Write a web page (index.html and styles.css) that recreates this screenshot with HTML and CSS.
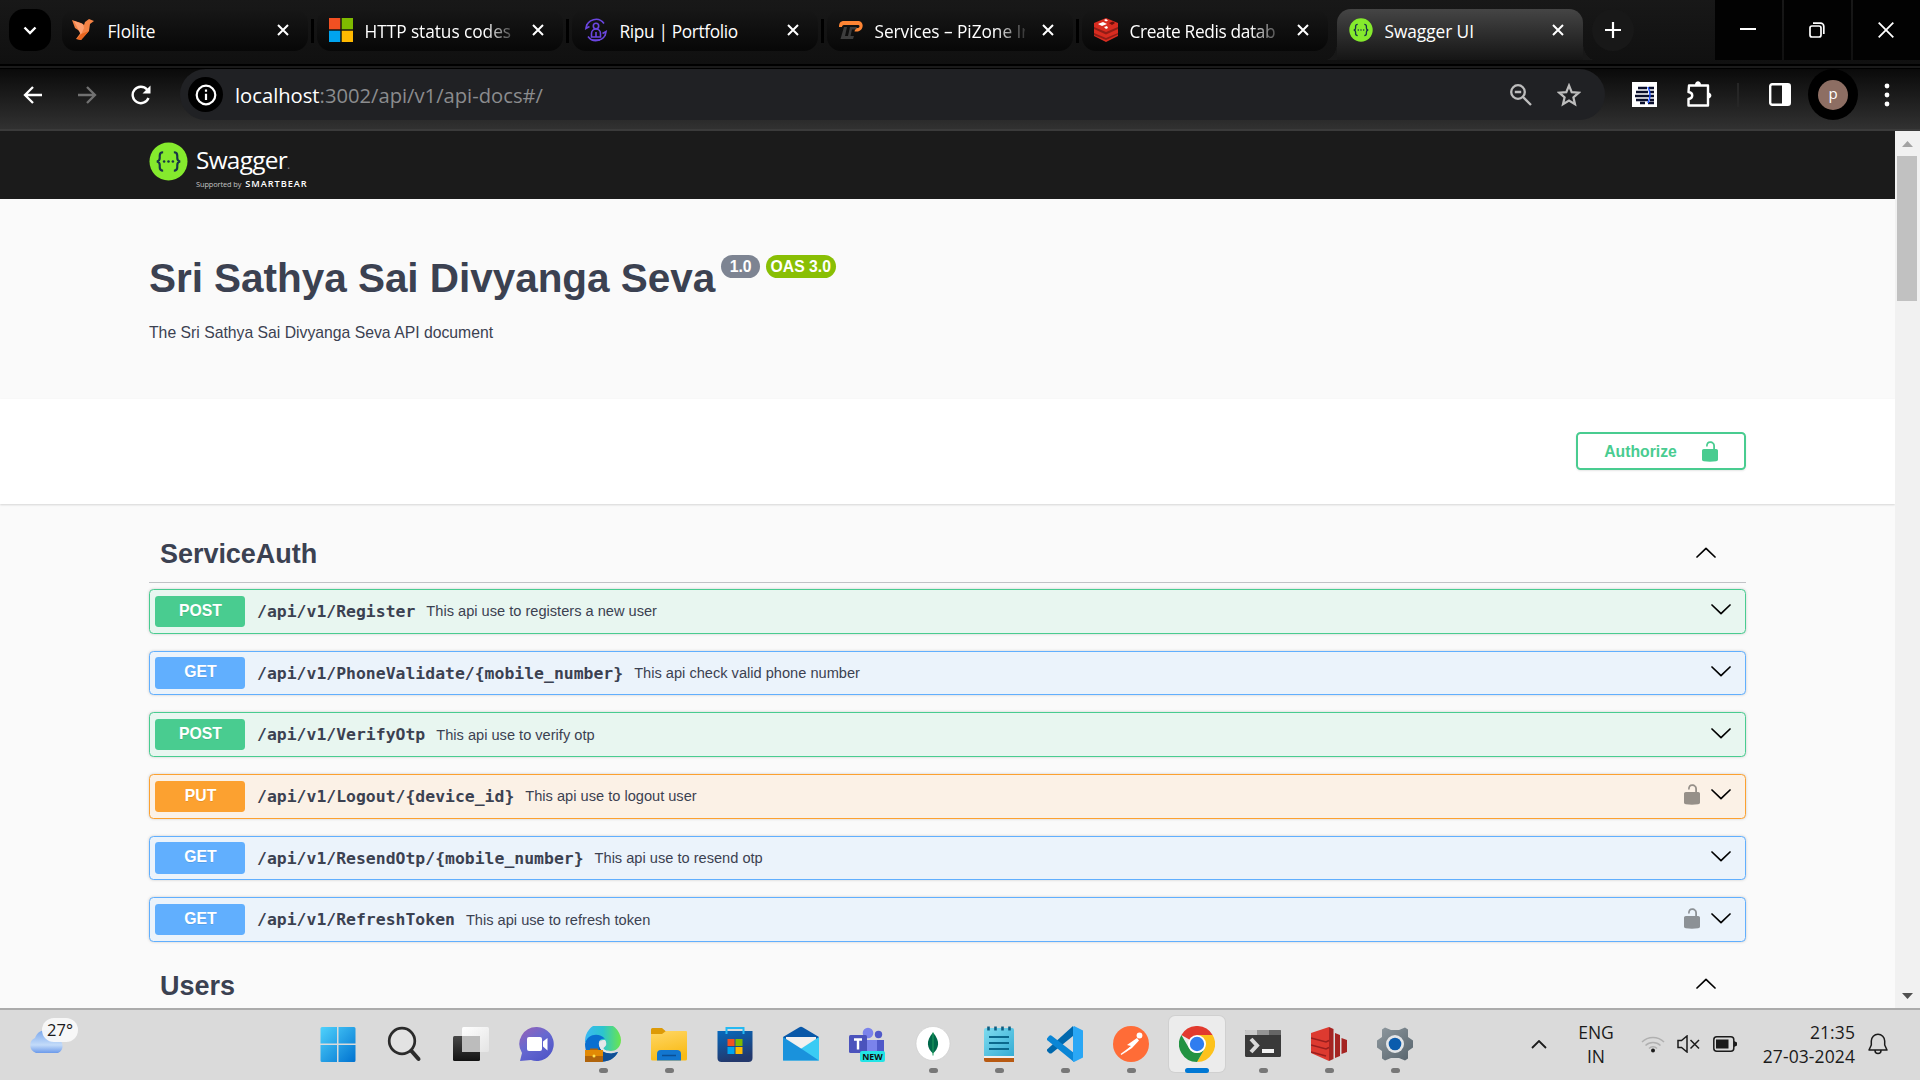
FILE: index.html
```html
<!DOCTYPE html>
<html lang="en">
<head>
<meta charset="utf-8">
<title>Swagger UI</title>
<link rel="stylesheet" href="styles.css">
</head>
<body>
<svg class="defs" width="0" height="0" aria-hidden="true">
  <defs>
    <symbol id="x" viewBox="0 0 12 12"><path d="M1 1l10 10M11 1L1 11" stroke="#fff" stroke-width="2" fill="none"/></symbol>
    <symbol id="down" viewBox="0 0 20 11"><path d="M1 1l9 8.6L19 1" stroke="#000" stroke-width="1.7" fill="none" stroke-linecap="round" stroke-linejoin="round"/></symbol>
    <symbol id="up" viewBox="0 0 20 11"><path d="M1 10l9-8.6L19 10" stroke="#000" stroke-width="1.7" fill="none" stroke-linecap="round" stroke-linejoin="round"/></symbol>
    <symbol id="lock" viewBox="0 0 16 21"><path d="M4 5.5C4 2.2 5.5.3 8.200.3S13 2.400 13 5v3h1.200c1 0 1.800.8 1.800 1.800v8.700c0 1-.9 1.500-1.800 1.800-4 .6-8.600.6-12.400 0C.9 20 0 19.500 0 18.500V9.800C0 8.800.8 8 1.800 8h9.400V5c0-2-1-3-3-3S5.700 3.300 5.700 5.500z" fill="currentColor"/></symbol>
    <symbol id="swag" viewBox="0 0 40 40">
      <circle cx="20" cy="20" r="19.500" fill="#85ea2d"/>
      <g fill="none" stroke="#173647" stroke-width="2.200"><path d="M14.500 10.500c-3 0-3.500 1.200-3.500 3.500v2.500c0 2-.8 3.200-3 3.500 2.200.3 3 1.500 3 3.500V26c0 2.300.5 3.500 3.500 3.500M25.500 10.500c3 0 3.500 1.200 3.500 3.500v2.500c0 2 .8 3.200 3 3.500-2.200.3-3 1.500-3 3.500V26c0 2.300-.5 3.500-3.500 3.500"/></g>
      <g fill="#173647"><circle cx="15.500" cy="20" r="1.300"/><circle cx="20" cy="20" r="1.300"/><circle cx="24.500" cy="20" r="1.300"/></g>
    </symbol>
  </defs>
</svg>

<header class="tabstrip">
  <button class="tab-search"><svg width="14" height="9" viewBox="0 0 14 9"><path d="M1.500 1.500L7 7l5.500-5.500" stroke="#fff" stroke-width="2.400" fill="none"/></svg></button>
  <nav class="tabs">
    <div class="tab">
      <svg class="fav" viewBox="0 0 24 24"><path d="M0 2l9 3 3 2 1-3 4-3 5 2-4 3-1 7-8 9-5-1 3-4 2-3-6-4z" fill="#f58345"/><path d="M2 3l9 3 1 4-3 7z" fill="#ffa070"/><path d="M9 16l8-3-8 9-4-1z" fill="#e8651f"/></svg>
      <span class="title">Flolite</span><svg class="close"><use href="#x"/></svg>
    </div>
    <div class="tab">
      <svg class="fav" viewBox="0 0 24 24"><path fill="#f25022" d="M0 0h11.300v11.300H0z"/><path fill="#7fba00" d="M12.700 0H24v11.300H12.700z"/><path fill="#00a4ef" d="M0 12.700h11.300V24H0z"/><path fill="#ffb900" d="M12.700 12.700H24V24H12.700z"/></svg>
      <span class="title fade">HTTP status codes</span><svg class="close"><use href="#x"/></svg>
    </div>
    <div class="tab">
      <svg class="fav" viewBox="0 0 24 24" fill="none" stroke="#6b46e0" stroke-width="1.600"><path d="M2 10A10 10 0 0 1 20 5.500M22 14A10 10 0 0 1 4 18.500M3 6L2 10.500l3.500-2M21 18l1-4.500-3.500 2"/><circle cx="12" cy="8" r="2.700"/><path d="M7.500 19v-3.500a4.500 4.500 0 0 1 9 0V19zM12 14v5M8 22h8"/></svg>
      <span class="title tight">Ripu | Portfolio</span><svg class="close"><use href="#x"/></svg>
    </div>
    <div class="tab">
      <svg class="fav" viewBox="0 0 24 24"><path d="M0 9c0-4 1.500-6 5-6h14c6 0 6.500 9 0 10.500h-3.500l1-3.500H19c2-.5 2-3 0-3H6C4 7 3 7.500 3 9z" fill="#ff8534"/><path d="M5 9h3l-2 9h3l2-9h7l-1 2.500h-4L11.500 18H15l-1 3H1.500z" fill="#3d3d3d"/></svg>
      <span class="title fade">Services – PiZone In</span><svg class="close"><use href="#x"/></svg>
    </div>
    <div class="tab">
      <svg class="fav" viewBox="0 0 24 24"><path d="M0 5l12-5 12 5v13l-12 6-12-6z" fill="#d82c20"/><path d="M0 9l12 5 12-5v2l-12 5.500L0 11zM0 15l12 5 12-5v1.500L12 22 0 17z" fill="#911d16"/><path d="M4 6l5-2 4 2-5 2zM10 2l2-1 2 1.500-2 1zM10 9l3-1 1 2-2 1z" fill="#fff"/><path d="M15 5l4-1.500 2 1.500-3 2z" fill="#6b0f0a"/></svg>
      <span class="title fade tight">Create Redis datab</span><svg class="close"><use href="#x"/></svg>
    </div>
    <div class="tab active">
      <svg class="fav"><use href="#swag"/></svg>
      <span class="title">Swagger UI</span><svg class="close"><use href="#x"/></svg>
    </div>
  </nav>
  <button class="new-tab"><svg width="16" height="16" viewBox="0 0 16 16"><path d="M8 0v16M0 8h16" stroke="#fff" stroke-width="2.200"/></svg></button>
  <div class="win">
    <button><svg width="16" height="16" viewBox="0 0 16 16"><path d="M0 7h16" stroke="#fff" stroke-width="2"/></svg></button>
    <button><svg width="16" height="16" viewBox="0 0 16 16" fill="none" stroke="#fff" stroke-width="1.700"><rect x="1" y="4" width="11" height="11" rx="2"/><path d="M4 1.200h7.500a3.300 3.300 0 0 1 3.300 3.300V12"/></svg></button>
    <button><svg width="16" height="16" viewBox="0 0 16 16"><path d="M.7.7l14.600 14.600M15.300.7L.7 15.300" stroke="#fff" stroke-width="1.800"/></svg></button>
  </div>
</header>

<div class="toolbar">
  <svg class="nav" viewBox="0 0 20 20"><path d="M19 10H2M10 2l-8 8 8 8" stroke="#fff" stroke-width="2.300" fill="none"/></svg>
  <svg class="nav" viewBox="0 0 20 20"><path d="M1 10h17M10 2l8 8-8 8" stroke="#717171" stroke-width="2.300" fill="none"/></svg>
  <svg class="nav" viewBox="0 0 20 20"><path d="M17.500 13A8.200 8.200 0 1 1 16 4.500l2 2.500" stroke="#fff" stroke-width="2.400" fill="none"/><path d="M19.500.5v8h-8z" fill="#fff"/></svg>
  <div class="omnibox">
    <span class="info"><svg width="22" height="22" viewBox="0 0 22 22"><circle cx="11" cy="11" r="9.300" fill="none" stroke="#fff" stroke-width="2.200"/><path d="M11 9.700v6.300M11 5.500v2.300" stroke="#fff" stroke-width="2.200"/></svg></span>
    <span class="url"><b>localhost</b>:3002/api/v1/api-docs#/</span>
    <svg width="24" height="24" viewBox="0 0 24 24" fill="none" stroke="#bdbdbd" stroke-width="2.300"><circle cx="9" cy="9" r="6.800"/><path d="M14 14l8 8M5.800 9h6.400"/></svg>
    <svg class="star" width="24" height="24" viewBox="0 0 24 24"><path d="M12 2.500l2.700 6.600 7 .6-5.300 4.600 1.600 6.900L12 17.500l-6 3.700 1.600-6.900-5.300-4.600 7-.6z" fill="none" stroke="#bdbdbd" stroke-width="2.200"/></svg>
  </div>
  <div class="ext">
    <svg width="25" height="25" viewBox="0 0 25 25"><path fill="#fff" d="M0 0h25v25H0z"/><path d="M6 6h9M17 6h5M4 10h12M18 10h4M3 14h19M4 18h12M18 18h4M8 21h5M16 21h6" stroke="#0a0f2c" stroke-width="2.500"/><path d="M16 5q4 8 0 16" stroke="#2356ff" stroke-width="1.500" fill="none"/></svg>
    <svg class="puzzle" width="26" height="27" viewBox="0 0 26 27"><path d="M3 4.500h19v20H2.500v-6.500c5-.5 5-6.500 0-7z" fill="none" stroke="#fff" stroke-width="2.400" stroke-linejoin="round"/><path d="M9 4c0-5 6-5 6 0zM22 11.500c4.500 0 4.500 6 0 6z" fill="#fff"/></svg>
    <i class="divider"></i>
    <svg class="panel" width="22" height="23" viewBox="0 0 22 23"><rect x="1.200" y="1.200" width="19.600" height="20.600" rx="2" fill="none" stroke="#fff" stroke-width="2.400"/><path d="M13 1h8v21h-8z" fill="#fff"/></svg>
    <span class="avatar"><span>p</span></span>
    <svg class="kebab" width="6" height="24" viewBox="0 0 6 24" fill="#fff"><circle cx="3" cy="3" r="2.400"/><circle cx="3" cy="12" r="2.400"/><circle cx="3" cy="21" r="2.400"/></svg>
  </div>
</div>

<div class="viewport">
  <main class="page">
    <div class="topbar">
      <svg class="mark"><use href="#swag"/></svg>
      <div class="brand">
        <div class="name">Swagger<small>.</small></div>
        <div class="by">Supported by <b>SMARTBEAR</b></div>
      </div>
    </div>
    <section class="info-block">
      <h1>Sri Sathya Sai Divyanga Seva<span class="pill">1.0</span><span class="pill oas">OAS 3.0</span></h1>
      <p>The Sri Sathya Sai Divyanga Seva API document</p>
    </section>
    <section class="schemes">
      <button class="authorize"><span>Authorize</span><svg width="16" height="21"><use href="#lock"/></svg></button>
    </section>
    <section class="ops">
      <div class="tag"><h2>ServiceAuth</h2><svg class="chev"><use href="#up"/></svg></div>
      <div class="op post first"><span class="method">POST</span><code>/api/v1/Register</code><span class="desc">This api use to registers a new user</span><svg class="chev"><use href="#down"/></svg></div>
      <div class="op get"><span class="method">GET</span><code>/api/v1/PhoneValidate/{mobile_number}</code><span class="desc">This api check valid phone number</span><svg class="chev"><use href="#down"/></svg></div>
      <div class="op post"><span class="method">POST</span><code>/api/v1/VerifyOtp</code><span class="desc">This api use to verify otp</span><svg class="chev"><use href="#down"/></svg></div>
      <div class="op put"><span class="method">PUT</span><code>/api/v1/Logout/{device_id}</code><span class="desc">This api use to logout user</span><svg class="lock"><use href="#lock"/></svg><svg class="chev"><use href="#down"/></svg></div>
      <div class="op get"><span class="method">GET</span><code>/api/v1/ResendOtp/{mobile_number}</code><span class="desc">This api use to resend otp</span><svg class="chev"><use href="#down"/></svg></div>
      <div class="op get"><span class="method">GET</span><code>/api/v1/RefreshToken</code><span class="desc">This api use to refresh token</span><svg class="lock"><use href="#lock"/></svg><svg class="chev"><use href="#down"/></svg></div>
      <div class="tag"><h2>Users</h2><svg class="chev"><use href="#up"/></svg></div>
    </section>
  </main>
  <div class="scrollbar">
    <svg width="11" height="6" viewBox="0 0 11 6"><path d="M0 6l5.500-6L11 6z" fill="#a3a3a3"/></svg>
    <i class="thumb"></i>
    <svg width="11" height="6" viewBox="0 0 11 6"><path d="M0 0l5.500 6L11 0z" fill="#505050"/></svg>
  </div>
</div>

<footer class="taskbar">
  <div class="weather">
    <svg width="38" height="24" viewBox="0 0 38 24"><defs><linearGradient id="cl" x2="0" y2="1"><stop offset="0" stop-color="#7aa7ec"/><stop offset=".65" stop-color="#c3dbf9"/><stop offset="1" stop-color="#6c9aea"/></linearGradient></defs><path d="M8 23a8 8 0 0 1-1-15C9 2 14 0 18 0c7 0 11 4 11.500 9A7.500 7.500 0 0 1 30 23z" fill="url(#cl)"/></svg>
    <span>27°</span>
  </div>
  <div class="apps">
    <span class="app start"><svg viewBox="0 0 36 36"><defs><linearGradient id="w" x2="1" y2="1"><stop offset="0" stop-color="#4fd2fc"/><stop offset="1" stop-color="#0072d0"/></linearGradient></defs><path d="M2 1h15v16.500H.5V2.500Q.5 1 2 1zM18.500 1H34q1.500 0 1.500 1.500v15h-17zM.5 19H17v17H2q-1.500 0-1.500-1.500zM18.500 19h17v15.500q0 1.500-1.500 1.500H18.500z" fill="url(#w)"/></svg></span>
    <span class="app"><svg viewBox="0 0 36 36" fill="none" stroke="#2b2b2b"><circle cx="15" cy="15" r="12.800" stroke-width="2.700" fill="#e3e3e3"/><path d="M24.500 25l7 8" stroke-width="4" stroke-linecap="round"/></svg></span>
    <span class="app"><svg viewBox="0 0 36 36"><defs><linearGradient id="tv" x2="0" y2="1"><stop offset="0" stop-color="#484848"/><stop offset="1" stop-color="#121212"/></linearGradient><linearGradient id="tw" x2="1" y2="1"><stop offset="0" stop-color="#fff"/><stop offset="1" stop-color="#e4e4e4"/></linearGradient></defs><rect y="10" width="27" height="25" rx="1.500" fill="url(#tv)"/><rect x="9" y="1" width="27" height="25" rx="1.500" fill="url(#tw)"/><path d="M9 10h18v16H9z" fill="#bcbcbc"/></svg></span>
    <span class="app"><svg viewBox="0 0 36 36"><defs><linearGradient id="ch" x2=".7" y2="1"><stop offset="0" stop-color="#9a62b5"/><stop offset=".5" stop-color="#6769d0"/><stop offset="1" stop-color="#5056c8"/></linearGradient></defs><path d="M18 1a17 17 0 1 1-6 33L1 35l2-8A17 17 0 0 1 18 1z" fill="url(#ch)"/><rect x="8" y="11" width="15" height="14" rx="2" fill="#fff"/><path d="M24 15.500L28.500 12v12.500L24 20.500z" fill="#fff"/></svg></span>
    <span class="app run"><svg viewBox="0 0 36 36"><defs><linearGradient id="eg"><stop offset="0" stop-color="#3ab8f5"/><stop offset=".5" stop-color="#2cc5cd"/><stop offset="1" stop-color="#6be64c"/></linearGradient></defs><path d="M0 16a18 18 0 0 1 36-2c0 8-6 11-10 11-5 0-8-1.500-7.500-3 3-2 4-5 1-8Z" fill="url(#eg)"/><path d="M0 18C2 8 14 6 20 13c-4-1-7 2-6 6 1 8 10 10 19 7-5 9-16 12-24 8C3 31 0 25 0 18z" fill="#0a6fd0"/><path d="M14 19c1 8 10 10 19 7-4 8-12 10.500-18 9z" fill="#104f94"/><path d="M20 14c-3-.5-6 2-6 5 1 6 8 9 14 8-5-1-9-3-10-5 3-2 4-5 2-8z" fill="#e3e8ea"/><path d="M5 24v-1.500h8V24h5v12H0V24z" fill="#b0640c"/><path d="M0 24h18v6H0z" fill="#e28a05"/><circle cx="9" cy="30" r="1.500" fill="#ffe14d"/></svg></span>
    <span class="app run"><svg viewBox="0 0 36 36"><defs><linearGradient id="fo" x2=".3" y2="1"><stop offset="0" stop-color="#ffd766"/><stop offset="1" stop-color="#f9bb17"/></linearGradient></defs><path d="M0 3.500Q0 2 1.500 2H11l4 3.500h20v4H0z" fill="#dd9a07"/><path d="M0 8h11l4-3h20q1 0 1 1v27q0 1.500-1.500 1.500h-33Q0 34.500 0 33z" fill="url(#fo)"/><path d="M6 34.500V28q0-4 4-4h16q4 0 4 4v6.500z" fill="#1276cf"/><path d="M11 29.500h14" stroke="#0a4f94" stroke-width="1.500"/></svg></span>
    <span class="app"><svg viewBox="0 0 36 36"><defs><linearGradient id="st" x2=".3" y2="1"><stop offset="0" stop-color="#0669bd"/><stop offset="1" stop-color="#23386c"/></linearGradient></defs><path d="M.5 5h35v27q0 4-4 4h-27q-4 0-4-4z" fill="url(#st)"/><path d="M9.500 8V2h17v6" fill="none" stroke="#25b9f2" stroke-width="2"/><path d="M10.500 13h7v7h-7z" fill="#f25022"/><path d="M18.500 13h7v7h-7z" fill="#7fba00"/><path d="M10.500 21h7v7h-7z" fill="#00a4ef"/><path d="M18.500 21h7v7h-7z" fill="#ffb900"/></svg></span>
    <span class="app"><svg viewBox="0 0 36 36"><path d="M0 11L16 1.500q2-1.500 4 0L36 11v4H0z" fill="#0a58a8"/><path d="M3 11h30v8L18 27 3 19z" fill="#f1efee"/><path d="M36 11v23.500H0z" fill="#3acbf4"/><path d="M0 11l18 11.500 18 12H0z" fill="#1a92dc"/><path d="M3 11h30L18 21.500z" fill="#f3f1f0"/></svg></span>
    <span class="app"><svg viewBox="0 0 36 36"><circle cx="19" cy="7" r="5.300" fill="#7b83eb"/><circle cx="29.500" cy="8.500" r="3.700" fill="#5059c9"/><path d="M23 14h12v13H23z" fill="#5059c9"/><path d="M12 14h16v16H12z" fill="#7b83eb"/><rect y="9" width="18" height="18" rx="1.500" fill="#4b53bc"/><path d="M5 13.500h8M9 13.500v10" stroke="#fff" stroke-width="2.400"/><rect x="11" y="25" width="25" height="11" rx="2" fill="#22e4e6"/><text x="23.500" y="33.500" text-anchor="middle" class="new">NEW</text></svg></span>
    <span class="app run"><svg viewBox="0 0 36 36"><circle cx="18" cy="17.500" r="17" fill="#fff" stroke="#c9c9c9" stroke-width=".6"/><path d="M18 6.500c8 9 5.500 16 0 21-5.500-5-8-12 0-21z" fill="#00684a"/><path d="M18 6.500v23" stroke="#1fa05f" stroke-width="1"/></svg></span>
    <span class="app run"><svg viewBox="0 0 36 36"><defs><linearGradient id="np" x2="1" y2="1"><stop offset="0" stop-color="#7fdcf0"/><stop offset="1" stop-color="#35acd4"/></linearGradient></defs><path d="M3 31h30v5H5q-2 0-2-2z" fill="#b85a12"/><path d="M3 29h30v3H3z" fill="#f2efed"/><path d="M5 2h26q2 0 2 2v26H3V4q0-2 2-2z" fill="url(#np)"/><path d="M8 11h20M8 17h20M8 23h20" stroke="#0b688d" stroke-width="2"/><path d="M7.500.5v4M14.500.5v4M21.500.5v4M28.500.5v4" stroke="#0f5e82" stroke-width="2.600"/></svg></span>
    <span class="app run"><svg viewBox="0 0 36 36"><path d="M0 23.500L26 0v10L5 27q-1.500 1-3 0L0 25q-.7-.8 0-1.500z" fill="#0068ad"/><path d="M0 12.500L2 10q1.500-1.500 3 0l22 17v9L0 14q-.7-.8 0-1.500z" fill="#0a86d6"/><path d="M27 0l9 4.500v27L27 36l-1-1V1z" fill="#2aa7f5"/></svg></span>
    <span class="app run"><svg viewBox="0 0 36 36"><circle cx="18" cy="18" r="18" fill="#ff6c37"/><circle cx="26.500" cy="9.500" r="2.900" fill="#fff"/><path d="M24 12l2 2.500-7 7.500-9 6 8-8-4-1z" fill="#fff"/><path d="M18 21L8 28.500" stroke="#fff" stroke-width="1.500"/></svg></span>
    <span class="app run current"><svg viewBox="0 0 36 36"><path d="M18 18L2.400 9A18 18 0 0 1 33.600 9z" fill="#e23a2e"/><path d="M18 9h15.600A18 18 0 0 1 18 36l7.800-13.500z" fill="#fdc21c"/><path d="M2.400 9l7.800 13.500a9 9 0 0 0 15.600 0L18 36A18 18 0 0 1 2.400 9z" fill="#229342"/><circle cx="18" cy="18" r="9" fill="#fff"/><circle cx="18" cy="18" r="7.200" fill="#2f7df0"/></svg></span>
    <span class="app run"><svg viewBox="0 0 36 36"><rect y="4" width="36" height="27" rx="1.500" fill="#3a3a3a"/><path d="M0 9V5q0-1 1-1h11v5z" fill="#c9c9c9"/><path d="M12 4h12v5H12z" fill="#949494"/><path d="M24 4h11q1 0 1 1v4H24z" fill="#666"/><path d="M6 13l6 6.500L6 26" stroke="#d9d9d9" stroke-width="4" fill="none"/><path d="M17 23h12v4H17z" fill="#f2f2f2"/></svg></span>
    <span class="app run"><svg viewBox="0 0 36 36"><path d="M0 7L18 1v34L0 27z" fill="#dd3a30"/><path d="M18 1l4.500 2v30L18 35zM24 7l5 2v21l-5 2zM30.500 12l5.500 2v12l-5.500 2z" fill="#a52422"/><path d="M0 12l15 4 3-1.500M0 19l15 4 3-1.500M0 26l15 4" stroke="#9a1f1e" stroke-width="1.600" fill="none"/></svg></span>
    <span class="app run"><svg viewBox="0 0 36 36"><defs><linearGradient id="ge" x2="1" y2="1"><stop offset="0" stop-color="#8f999f"/><stop offset="1" stop-color="#56636c"/></linearGradient></defs><path d="M8 1.500L14 4h8l6-2.500 3 2V11l5 3.500v7L31 25v7.500l-3 2L22 32h-8l-6 2.500-3-2V25l-5-3.500v-7L5 11V3.500z" fill="url(#ge)"/><circle cx="18" cy="18" r="9" fill="#e4e6e8"/><circle cx="18" cy="18" r="6.300" fill="#0b5cad"/></svg></span>
  </div>
  <div class="tray">
    <svg class="tray-up" width="16" height="9" viewBox="0 0 16 9"><path d="M1 8l7-7 7 7" stroke="#1b1b1b" stroke-width="1.800" fill="none"/></svg>
    <div class="lang">ENG<br>IN</div>
    <svg class="wifi" width="24" height="18" viewBox="0 0 24 18" fill="none" stroke="#b0b0b0" stroke-width="1.500"><path d="M1 7a15.500 15.500 0 0 1 22 0M4.500 10.500a10.600 10.600 0 0 1 15 0M8 13.500a5.700 5.700 0 0 1 8 0"/><circle cx="12" cy="15.500" r="2" fill="#1b1b1b" stroke="none"/></svg>
    <svg class="sound" width="24" height="18" viewBox="0 0 24 18" fill="none" stroke="#1b1b1b" stroke-width="1.500"><path d="M1 5.500h3.500L10 1v16l-5.500-4.500H1zM13.500 5l8.500 8.500M22 5l-8.500 8.500"/></svg>
    <svg class="batt" width="25" height="16" viewBox="0 0 25 16"><rect x=".8" y=".8" width="20" height="14.400" rx="3" fill="none" stroke="#1b1b1b" stroke-width="1.500"/><rect x="3" y="3.500" width="12.500" height="9" fill="#1b1b1b"/><path d="M21 5l3 1.500v3L21 11z" fill="#1b1b1b"/></svg>
    <div class="clock">21:35<br>27-03-2024</div>
    <svg class="bell" width="20" height="22" viewBox="0 0 20 22" fill="none" stroke="#1b1b1b" stroke-width="1.500"><path d="M1 17l2.300-5V8a6.700 6.700 0 0 1 13.400 0v4l2.300 5zM7 17.500a3 3 0 0 0 6 0" stroke-linejoin="round"/></svg>
  </div>
</footer>
</body>
</html>
```
FILE: styles.css
```css
* { box-sizing: border-box; }
body { margin: 0; width: 1920px; height: 1080px; overflow: hidden; display: flex; flex-direction: column; background: #fafafa; font-family: "Open Sans", "Noto Sans", sans-serif; }
button { border: 0; padding: 0; margin: 0; background: none; font: inherit; display: flex; align-items: center; justify-content: center; }
svg { display: block; flex: none; }
.defs { position: absolute; }

/* Browser chrome */
.tabstrip { height: 69px; flex: none; display: flex; align-items: flex-start; padding-left: 9px; background: linear-gradient(#181818, #101010 64px, #000 64px, #000 66px, #1a1a1a 66px, #1a1a1a 68px, #000 68px); }
.tab-search { width: 42px; height: 42px; margin-top: 9px; border-radius: 15px; background: #000; }
.tabs { display: flex; gap: 9px; margin: 9px 0 0 11px; }
.tab { position: relative; width: 246px; height: 42px; display: flex; align-items: center; padding: 0 19px 0 12px; border-radius: 14px; color: #fff; background: linear-gradient(#171717, #070707); }
.tab:first-child { padding-left: 10px; }
.tab:nth-child(-n+4)::after { content: ""; position: absolute; right: -6px; top: 10px; width: 3px; height: 24px; background: #000; }
.tab.active { height: 51px; padding-bottom: 9px; border-radius: 14px 14px 0 0; background: linear-gradient(#454545, #151515); }
.tab.active::before, .tab.active::after { content: ""; position: absolute; bottom: 0; width: 12px; height: 18px; }
.tab.active::before { left: -12px; background: radial-gradient(ellipse at 0 0, transparent 70%, #181818 71%); }
.tab.active::after { right: -12px; background: radial-gradient(ellipse at 100% 0, transparent 70%, #181818 71%); }
.fav { width: 24px; height: 24px; }
.title { flex: 1; margin: 3px 8px 0 11.5px; white-space: nowrap; overflow: hidden; font-size: 17.3px; line-height: 24px; letter-spacing: -.05px; }
.title.tight { letter-spacing: -.36px; }
.title.fade { max-width: 150px; margin-right: auto; -webkit-mask: linear-gradient(90deg, #000 80%, rgba(0,0,0,.15)); mask: linear-gradient(90deg, #000 80%, rgba(0,0,0,.15)); }
.close { width: 12px; height: 12px; }
.new-tab { width: 42px; height: 42px; margin: 9px 0 0 9px; border-radius: 50%; background: #181818; }
.win { display: flex; gap: 2px; margin-left: auto; height: 60px; }
.win button { width: 67px; padding-right: 2px; background: #020202; }

.toolbar { height: 62px; flex: none; display: flex; align-items: flex-start; padding-left: 23px; background: linear-gradient(#0a0a0a, #313131 60px, #3b3b3b 60px); }
.nav { width: 20px; height: 20px; margin: 16px 34px 0 0; }
.omnibox { width: 1425px; height: 51px; margin-left: -5px; display: flex; align-items: center; padding: 0 24px 0 8px; border-radius: 26px; background: #202124; }
.info { width: 35px; height: 35px; border-radius: 50%; background: #000; display: flex; align-items: center; justify-content: center; }
.url { flex: 1; margin-left: 12px; font-size: 20.2px; line-height: 30px; color: #8b8c8e; }
.url b { font-weight: 400; color: #fff; }
.star { margin-left: 24px; }
.ext { height: 51px; display: flex; align-items: center; margin-left: 27px; }
.puzzle { margin-left: 29px; }
.divider { width: 2px; height: 24px; margin-left: 25px; background: #262626; }
.panel { margin-left: 30px; }
.avatar { width: 50px; height: 51px; margin-left: 17px; border-radius: 50%; background: #000; display: flex; align-items: center; justify-content: center; }
.avatar span { width: 30px; height: 30px; border-radius: 50%; background: #8d6e63; color: #fff; font-size: 15px; line-height: 27px; text-align: center; }
.kebab { margin-left: 26px; }

/* Page */
.viewport { height: 877px; flex: none; display: flex; overflow: hidden; }
.page { width: 1895px; overflow: hidden; color: #3b4151; font-family: "Liberation Sans", Arial, sans-serif; }
.topbar { height: 68px; padding: 11px 149px 0; display: flex; background: #1b1b1b; color: #fff; font-family: "Open Sans", sans-serif; }
.mark { width: 39px; height: 39px; }
.brand { margin-left: 8px; }
.name { font-size: 24.4px; line-height: 34px; letter-spacing: -.7px; margin-top: 1px; }
.name small { font-size: 12px; color: #888; }
.by { margin-top: -4px; height: 11px; display: flex; align-items: baseline; gap: 4px; font-size: 7.4px; line-height: 11px; letter-spacing: -.1px; color: #c4c4c4; white-space: nowrap; }
.by b { font-size: 9.2px; font-weight: 600; color: #fff; letter-spacing: .95px; }
.info-block { height: 200px; padding: 56px 149px 0; }
h1 { margin: 0; display: flex; font-size: 40.5px; line-height: 46px; letter-spacing: -.04px; white-space: nowrap; }
.pill { height: 23px; margin: 0 0 0 6px; padding: 0 8.500px; border-radius: 12px; background: #7d8492; color: #fff; font-size: 15.75px; line-height: 23px; letter-spacing: 0; }
.pill.oas { padding: 0 4.5px; background: #89bf04; }
h1 + p { margin: 23px 0 0; font-size: 15.75px; line-height: 18px; }
.schemes { height: 105px; display: flex; align-items: flex-start; justify-content: flex-end; padding: 33px 149px 0; background: #fff; box-shadow: 0 1px 2px rgba(0,0,0,.15); position: relative; }
.authorize { width: 170px; height: 38px; gap: 25px; border: 2px solid #49cc90; border-radius: 4.5px; color: #49cc90; font-size: 15.75px; font-weight: 700; box-shadow: 0 1px 2px rgba(0,0,0,.1); }
.authorize span { padding-top: 1px; }
.ops { padding: 23px 149px 0; }
.tag { height: 56px; display: flex; align-items: center; justify-content: space-between; padding: 0 30px 0 11px; border-bottom: 1px solid #c0c2c6; }
.tag h2 { margin: 0; font-size: 27px; line-height: 31px; letter-spacing: -.04px; }
.chev { width: 20px; height: 11px; margin-bottom: 3px; }
.tag .chev { margin-bottom: 5px; }
.op { height: 44.75px; margin-bottom: 16.875px; display: flex; align-items: center; padding: 0 14px 0 5px; border: 1px solid; border-radius: 4.5px; box-shadow: 0 0 3px rgba(0,0,0,.19); }
.op.first { margin-top: 6px; }
.method { width: 90px; height: 31.5px; border-radius: 3.4px; color: #fff; font-size: 15.75px; font-weight: 700; line-height: 30.5px; padding-left: 1px; text-align: center; text-shadow: 0 1px 0 rgba(0,0,0,.1); }
.op code { margin: 1.5px 11px 0 12px; font: 700 16.44px/20px "DejaVu Sans Mono", monospace; white-space: nowrap; }
.desc { flex: 1; font-size: 14.625px; }
.post { border-color: #49cc90; background: #e8f6f0; }
.post .method { background: #49cc90; }
.get { border-color: #61affe; background: #ebf3fb; }
.get .method { background: #61affe; }
.put { border-color: #fca130; background: #fbf1e6; }
.put .method { background: #fca130; }
.lock { width: 16px; height: 21px; margin: 0 11px 3px 0; color: #000; opacity: .4; }
.scrollbar { width: 25px; display: flex; flex-direction: column; align-items: center; background: #f1f1f1; padding: 10px 0 9px; }
.thumb { width: 20px; height: 145px; margin: 9px 1px auto 0; background: #c1c1c1; }

/* Taskbar */
.taskbar { height: 72px; flex: none; display: flex; border-top: 2px solid #ababab; background: #dadada; color: #1b1b1b; }
.weather { position: relative; width: 276px; height: 70px; margin-left: 30px; padding-top: 20px; }
.weather svg { margin-left: -2px; }
.weather span { position: absolute; left: 12px; top: 8px; width: 36px; height: 24px; border-radius: 12px; background: rgba(250,250,250,.92); font-size: 16.5px; line-height: 23px; text-align: center; }
.apps { display: flex; padding-top: 6px; }
.app { position: relative; width: 56px; height: 56px; margin: 0 5px; padding: 10px; border-radius: 6px; }
.app.start { padding-left: 8.500px; }
.app svg { width: 36px; height: 36px; }
.app.run::after { content: ""; position: absolute; left: 23.500px; bottom: -1px; width: 9px; height: 5px; border-radius: 3px; background: #787878; }
.app.current { background: #ececec; box-shadow: 0 0 0 1px #d0d0d0; }
.app.current::after { left: 16px; width: 24px; background: #0078d4; }
.new { font: 700 8.8px "Open Sans", sans-serif; fill: #111; }
.tray { display: flex; align-items: center; margin-left: 103px; height: 68px; font-size: 17.5px; line-height: 24px; }
.lang { width: 60px; margin-left: 19px; text-align: center; }
.wifi { margin-left: 15px; }
.sound { margin-left: 12px; }
.batt { margin-left: 12px; }
.clock { width: 117px; text-align: right; letter-spacing: .1px; }
.bell { margin-left: 13px; }
```
